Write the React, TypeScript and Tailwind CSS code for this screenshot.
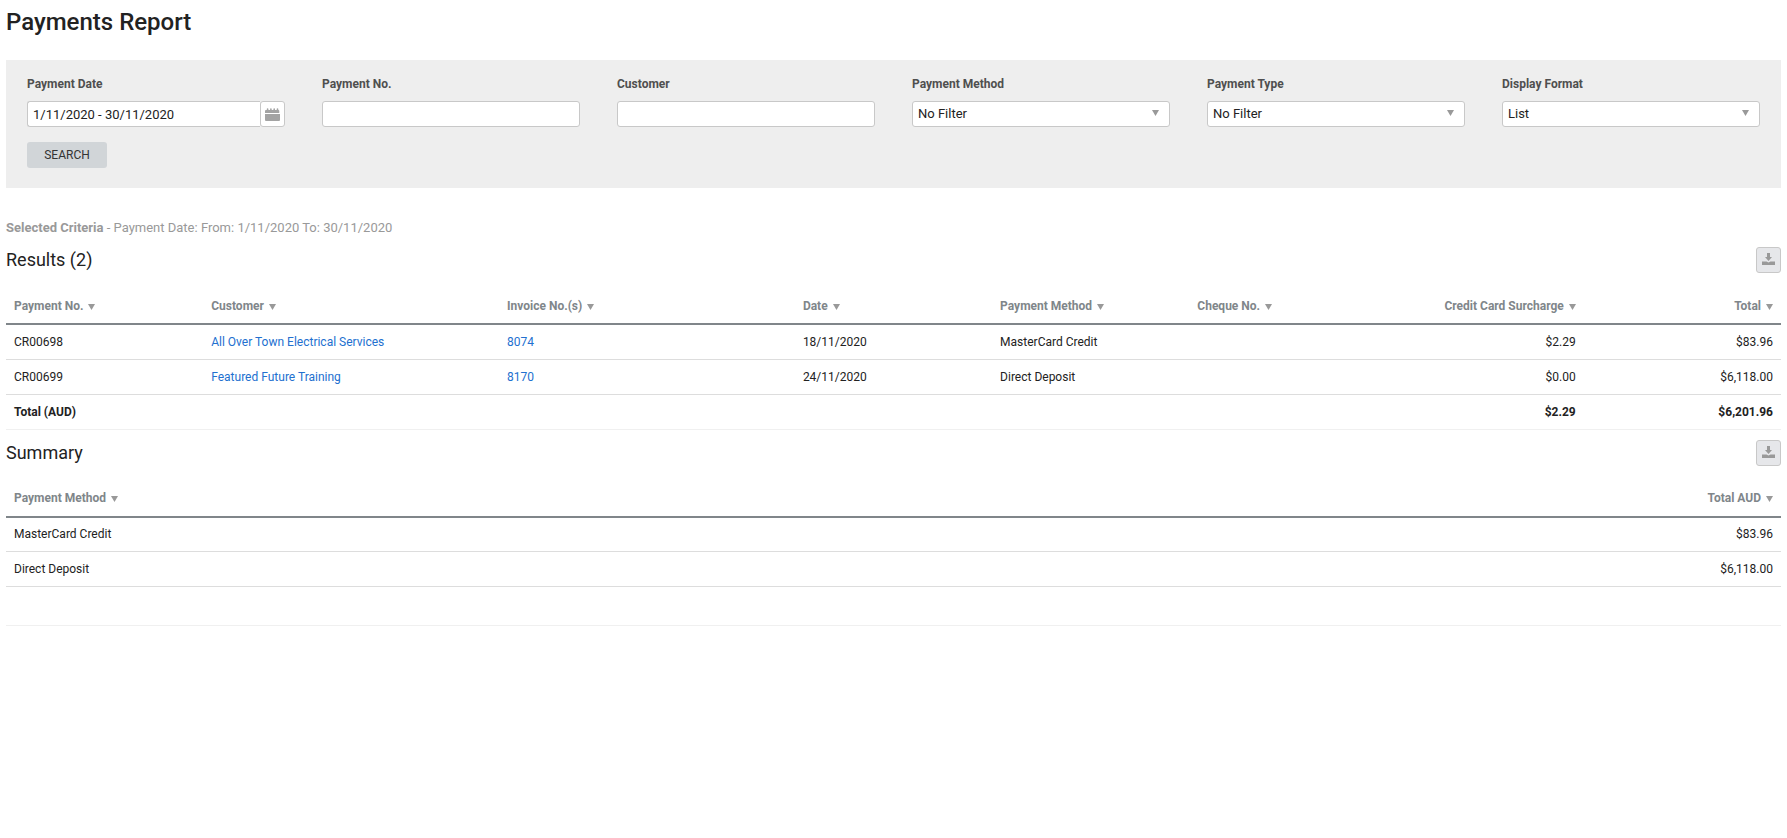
import { useState } from "react";
import { clsx } from "clsx";

type Column = {
  label: string;
  width: string;
  right?: boolean;
};

type Payment = {
  no: string;
  customer: string;
  invoice: string;
  date: string;
  method: string;
  cheque: string;
  surcharge: string;
  total: string;
};

const paymentColumns: Column[] = [
  { label: "Payment No.", width: "w-1/9" },
  { label: "Customer", width: "w-1/6" },
  { label: "Invoice No.(s)", width: "w-1/6" },
  { label: "Date", width: "w-1/9" },
  { label: "Payment Method", width: "w-1/9" },
  { label: "Cheque No.", width: "w-1/9" },
  { label: "Credit Card Surcharge", width: "w-1/9", right: true },
  { label: "Total", width: "w-1/9", right: true },
];

const summaryColumns: Column[] = [
  { label: "Payment Method", width: "w-1/2" },
  { label: "Total AUD", width: "w-1/2", right: true },
];

const payments: Payment[] = [
  {
    no: "CR00698",
    customer: "All Over Town Electrical Services",
    invoice: "8074",
    date: "18/11/2020",
    method: "MasterCard Credit",
    cheque: "",
    surcharge: "$2.29",
    total: "$83.96",
  },
  {
    no: "CR00699",
    customer: "Featured Future Training",
    invoice: "8170",
    date: "24/11/2020",
    method: "Direct Deposit",
    cheque: "",
    surcharge: "$0.00",
    total: "$6,118.00",
  },
];

const labelClass = "mb-[9px] block text-xs font-bold text-[#4f4f4f]";
const fieldClass =
  "h-[26px] w-full min-w-0 rounded-[3px] border border-[#c8c8c8] bg-white px-[5px] text-[13px] text-[#222]";
const linkClass = "text-[#2270cf] hover:underline";

function Triangle({ className }: { className?: string }) {
  return (
    <svg viewBox="0 0 7 6" className={clsx("h-1.5 w-[7px] fill-[#999]", className)} aria-hidden="true">
      <path d="M0 0h7L3.5 6z" />
    </svg>
  );
}

function CalendarIcon() {
  return (
    <svg viewBox="0 0 15 13" className="h-[13px] w-[15px] fill-[#a3a3a3]" aria-hidden="true">
      <path d="M0 5V3q0-1 1-1h.8V1q0-.8.8-.8t.8.8v1h1.700V1q0-.8.8-.8t.8.8v1h1.700V1q0-.8.8-.8t.8.8v1h1.700V1q0-.8.8-.8t.8.8v1q1 0 1 1v2z" />
      <path d="M0 6h15v6q0 1-1 1H1q-1 0-1-1z" />
    </svg>
  );
}

function DownloadIcon() {
  return (
    <svg viewBox="0 0 13 12" className="h-3 w-[13px] fill-[#999]" aria-hidden="true">
      <path d="M5 0h3v4h2L6.500 8 3 4h2z" />
      <path d="M0 8.500h4.500l2 1 2-1H13V12H0z" />
    </svg>
  );
}

function TextField({ id, label }: { id: string; label: string }) {
  return (
    <div>
      <label htmlFor={id} className={labelClass}>
        {label}
      </label>
      <input id={id} type="text" className={clsx(fieldClass, "block")} />
    </div>
  );
}

function SelectField({ id, label, options }: { id: string; label: string; options: string[] }) {
  return (
    <div>
      <label htmlFor={id} className={labelClass}>
        {label}
      </label>
      <div className="relative">
        <select id={id} className={clsx(fieldClass, "block appearance-none")}>
          {options.map((o) => (
            <option key={o}>{o}</option>
          ))}
        </select>
        <Triangle className="pointer-events-none absolute top-[9px] right-[11px]" />
      </div>
    </div>
  );
}

function SectionHeader({ title }: { title: string }) {
  return (
    <div className="flex items-center justify-between">
      <h2 className="text-lg/[26px] text-[#222]">{title}</h2>
      <button
        type="button"
        aria-label={`Download ${title}`}
        className="flex h-[26px] w-[25px] items-center justify-center rounded-[3px] border border-[#c8c8c8] bg-[#e6e7ea] pb-0.5"
      >
        <DownloadIcon />
      </button>
    </div>
  );
}

function TableHead({ columns }: { columns: Column[] }) {
  return (
    <thead>
      <tr className="h-9 border-b-2 border-[#80868a]">
        {columns.map((c) => (
          <th
            key={c.label}
            scope="col"
            className={clsx("px-2 font-bold text-[#80868a]", c.width, c.right ? "text-right" : "text-left")}
          >
            <button type="button" className="inline-flex items-center gap-[5px] whitespace-nowrap">
              {c.label}
              <Triangle className="mt-0.5" />
            </button>
          </th>
        ))}
      </tr>
    </thead>
  );
}

export default function App() {
  const [range, setRange] = useState("1/11/2020 - 30/11/2020");

  return (
    <main className="bg-white px-1.5 py-1.5 font-[Roboto,Arial,sans-serif] text-[#222]">
      <h1 className="text-2xl font-medium">Payments Report</h1>

      <form
        onSubmit={(e) => e.preventDefault()}
        className="mt-[22px] bg-[#eee] px-[21px] pt-4 pb-5"
      >
        <div className="grid grid-cols-6 gap-x-[37px]">
          <div>
            <label htmlFor="payment-date" className={labelClass}>
              Payment Date
            </label>
            <div className="flex">
              <input
                id="payment-date"
                type="text"
                value={range}
                onChange={(e) => setRange(e.target.value)}
                className={clsx(fieldClass, "flex-1 rounded-r-none border-r-0")}
              />
              <button
                type="button"
                aria-label="Choose dates"
                className="flex h-[26px] w-[25px] items-center justify-center rounded-[3px] border border-[#c8c8c8] bg-white"
              >
                <CalendarIcon />
              </button>
            </div>
          </div>
          <TextField id="payment-no" label="Payment No." />
          <TextField id="customer" label="Customer" />
          <SelectField id="payment-method" label="Payment Method" options={["No Filter"]} />
          <SelectField id="payment-type" label="Payment Type" options={["No Filter"]} />
          <SelectField id="display-format" label="Display Format" options={["List"]} />
        </div>
        <button
          type="submit"
          className="mt-[15px] block h-[26px] w-20 rounded-[3px] bg-[#d1d5d8] text-xs text-[#333]"
        >
          SEARCH
        </button>
      </form>

      <p className="mt-[30px] mb-[9px] text-[13px]/5 text-[#999]">
        <b>Selected Criteria</b> - Payment Date: From: 1/11/2020 To: 30/11/2020
      </p>

      <section>
        <SectionHeader title={`Results (${payments.length})`} />
        <table className="mt-[15px] w-full table-fixed border-collapse text-xs">
          <TableHead columns={paymentColumns} />
          <tbody>
            {payments.map((p) => (
              <tr key={p.no} className="h-[35px] border-b border-[#ddd]">
                <td className="px-2">{p.no}</td>
                <td className="px-2">
                  <a href="#customer" className={linkClass}>
                    {p.customer}
                  </a>
                </td>
                <td className="px-2">
                  <a href="#invoice" className={linkClass}>
                    {p.invoice}
                  </a>
                </td>
                <td className="px-2">{p.date}</td>
                <td className="px-2">{p.method}</td>
                <td className="px-2">{p.cheque}</td>
                <td className="px-2 text-right">{p.surcharge}</td>
                <td className="px-2 text-right">{p.total}</td>
              </tr>
            ))}
          </tbody>
          <tfoot>
            <tr className="h-[35px] border-b border-[#f0f0f0] font-bold">
              <td className="px-2" colSpan={6}>
                Total (AUD)
              </td>
              <td className="px-2 text-right">$2.29</td>
              <td className="px-2 text-right">$6,201.96</td>
            </tr>
          </tfoot>
        </table>
      </section>

      <section className="mt-2.5">
        <SectionHeader title="Summary" />
        <table className="mt-[15px] w-full table-fixed border-collapse text-xs">
          <TableHead columns={summaryColumns} />
          <tbody>
            {payments.map((p) => (
              <tr key={p.no} className="h-[35px] border-b border-[#ddd]">
                <td className="px-2">{p.method}</td>
                <td className="px-2 text-right">{p.total}</td>
              </tr>
            ))}
          </tbody>
          <tfoot>
            <tr className="h-[39px] border-b border-[#f0f0f0]">
              <td colSpan={2} />
            </tr>
          </tfoot>
        </table>
      </section>
    </main>
  );
}
